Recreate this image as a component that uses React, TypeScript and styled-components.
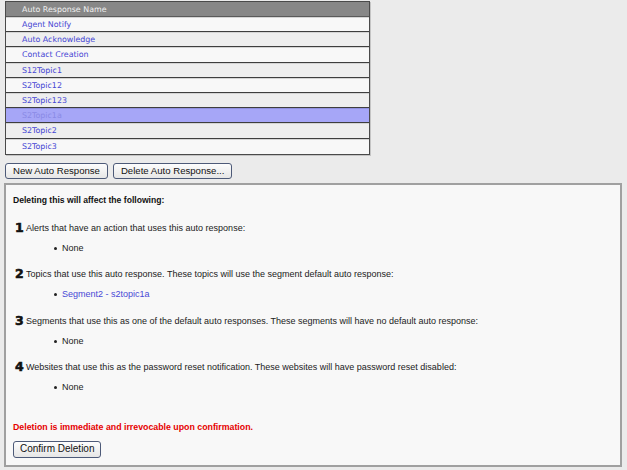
import React from "react";
import styled, { createGlobalStyle } from "styled-components";

const Global = createGlobalStyle`
  html, body { margin: 0; padding: 0; background: #ebebeb; }
  body { font-family: "Liberation Sans", Arial, sans-serif; color: #222; }
  * { box-sizing: border-box; }
`;

const Page = styled.div`
  padding: 1px 0 0 4px;
  width: 627px;
  height: 470px;
`;

const Table = styled.div`
  margin-left: 1px;
  width: 365px;
  border: 1px solid #4a4a4a;
  box-shadow: 1px 1px 0 #c4c4c4;
  font-family: "DejaVu Sans", Verdana, sans-serif;
  font-size: 7.9px;
`;

const HeaderRow = styled.div`
  height: 15px;
  background: #878787;
  border-bottom: 1px solid #5a5a5a;
  color: #f0f0f0;
  display: flex;
  align-items: center;
  padding-left: 16px;
`;

const Row = styled.div<{ $alt: boolean; $selected: boolean }>`
  height: 15.2px;
  display: flex;
  align-items: center;
  padding-left: 16px;
  background: ${(p) => (p.$selected ? "#a6a6f7" : p.$alt ? "#eeeeee" : "#f8f8f8")};
  color: ${(p) => (p.$selected ? "#8a8ae6" : "#4545d4")};
  border-top: 1px solid ${(p) => (p.$selected ? "#9090e0" : "#d4d4d4")};
  border-bottom: 1px solid #3e3e3e;
  &:last-child { border-bottom: none; }
`;

const ButtonBar = styled.div`
  display: flex;
  gap: 5px;
  margin: 8px 0 4px 1px;
`;

const Button = styled.button`
  height: 16px;
  padding: 0 7px;
  border: 1px solid #4d5a78;
  border-radius: 3px;
  background: linear-gradient(#fdfdfd, #e6e6e6);
  font-family: "Liberation Sans", Arial, sans-serif;
  font-size: 9.6px;
  color: #111;
  line-height: 14px;
  cursor: pointer;
`;

const Panel = styled.div`
  width: 618px;
  height: 284px;
  border: 2px solid #a0a0a0;
  background: #f8f8f8;
  padding: 9px 8px 8px 7px;
  font-size: 9px;
  line-height: 12px;
`;

const Heading = styled.div`
  font-weight: bold;
  font-size: 8.6px;
  color: #111;
`;

const Section = styled.div<{ $top: number }>`
  margin-top: ${(p) => p.$top}px;
`;

const ItemLine = styled.div`
  display: flex;
  align-items: center;
  height: 12px;
`;

const Num = styled.span`
  width: 13px;
  padding-left: 2px;
  font-family: "DejaVu Sans", "Liberation Sans", sans-serif;
  font-weight: 900;
  font-size: 12.5px;
  color: #111;
  -webkit-text-stroke: 0.6px #111;
  line-height: 12px;
`;

const BulletList = styled.ul`
  list-style: none;
  margin: 8px 0 0 0;
  padding: 0 0 0 49px;
`;

const Bullet = styled.li<{ $link?: boolean }>`
  position: relative;
  height: 12px;
  color: ${(p) => (p.$link ? "#4848d6" : "#222")};
  &::before {
    content: "";
    position: absolute;
    left: -8px;
    top: 5px;
    width: 3px;
    height: 3px;
    border-radius: 50%;
    background: #222;
  }
`;

const Warning = styled.div`
  margin-top: 28px;
  color: #e60000;
  font-weight: bold;
  font-size: 8.8px;
`;

const ConfirmBar = styled.div`
  margin-top: 8px;
`;

const ConfirmButton = styled(Button)`
  height: 17px;
  padding: 0 6px;
  font-size: 10px;
`;

const rows = [
  "Agent Notify",
  "Auto Acknowledge",
  "Contact Creation",
  "S12Topic1",
  "S2Topic12",
  "S2Topic123",
  "S2Topic1a",
  "S2Topic2",
  "S2Topic3",
];

const sections: { n: string; text: string; items: string[]; link?: boolean; top: number }[] = [
  { n: "1", text: "Alerts that have an action that uses this auto response:", items: ["None"], top: 16 },
  {
    n: "2",
    text: "Topics that use this auto response. These topics will use the segment default auto response:",
    items: ["Segment2 - s2topic1a"],
    link: true,
    top: 14,
  },
  {
    n: "3",
    text: "Segments that use this as one of the default auto responses. These segments will have no default auto response:",
    items: ["None"],
    top: 15,
  },
  {
    n: "4",
    text: "Websites that use this as the password reset notification. These websites will have password reset disabled:",
    items: ["None"],
    top: 14,
  },
];

export default function App() {
  return (
    <Page>
      <Global />
      <Table>
        <HeaderRow>Auto Response Name</HeaderRow>
        {rows.map((r, i) => (
          <Row key={r} $alt={i % 2 === 1} $selected={r === "S2Topic1a"}>
            {r}
          </Row>
        ))}
      </Table>
      <ButtonBar>
        <Button>New Auto Response</Button>
        <Button>Delete Auto Response...</Button>
      </ButtonBar>
      <Panel>
        <Heading>Deleting this will affect the following:</Heading>
        {sections.map((s) => (
          <Section key={s.n} $top={s.top}>
            <ItemLine>
              <Num>{s.n}</Num>
              <span>{s.text}</span>
            </ItemLine>
            <BulletList>
              {s.items.map((it) => (
                <Bullet key={it} $link={s.link}>
                  {it}
                </Bullet>
              ))}
            </BulletList>
          </Section>
        ))}
        <Warning>Deletion is immediate and irrevocable upon confirmation.</Warning>
        <ConfirmBar>
          <ConfirmButton>Confirm Deletion</ConfirmButton>
        </ConfirmBar>
      </Panel>
    </Page>
  );
}
